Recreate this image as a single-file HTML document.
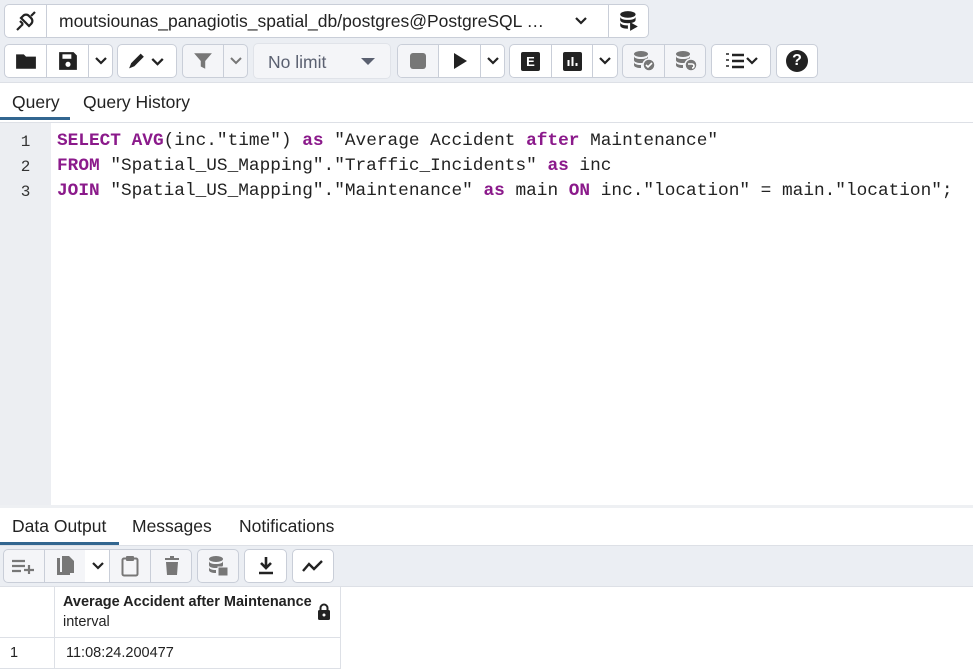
<!DOCTYPE html>
<html><head><meta charset="utf-8"><style>
*{box-sizing:border-box;margin:0;padding:0}
body{width:973px;height:669px;overflow:hidden;background:#fff;font-family:"Liberation Sans",sans-serif;color:#222;position:relative}
.abs{position:absolute}
.tb{position:absolute;left:0;top:0;width:973px;height:83px;background:#ebeef3;border-bottom:1px solid #dde0e6}
.grp{position:absolute;border:1px solid #c9ced8;border-radius:5px;background:#fff;overflow:hidden}
.sep{position:absolute;top:0;bottom:0;width:1px;background:#c9ced8}
.ic{position:absolute;display:flex;align-items:center;justify-content:center}
.tab{position:absolute;font-size:17.5px;color:#222}
.code{position:absolute;left:57px;font-family:"Liberation Mono",monospace;font-size:17.78px;color:#222;white-space:pre;line-height:25px}
.k{color:#8b1a8b;font-weight:bold}
.ln{position:absolute;width:51px;text-align:center;font-family:"Liberation Mono",monospace;font-size:16px;color:#333}
</style></head><body>
<div class="tb"></div>
<div class="grp" style="left:4px;top:4px;width:645px;height:34px">
 <div class="sep" style="left:41px"></div><div class="sep" style="left:603px"></div>
 <div class="ic" style="left:0;top:0;width:41px;height:32px"><svg width="24" height="24" viewBox="0 0 24 24" fill="none" stroke="#222" stroke-width="2.2"><path d="M3 21l4-4M17 7l4-4"/><path d="M7 9l8 8 2-2a4 4 0 0 0 0-6l-2-2a4 4 0 0 0-6 0z"/><path d="M9 15l-2 2M6 12l3 3"/></svg></div>
 <div class="abs" style="left:54px;top:6px;font-size:17.5px;color:#222">moutsiounas_panagiotis_spatial_db/postgres@PostgreSQL …</div>
 <div class="ic" style="left:564px;top:0;width:24px;height:32px"><svg width="14" height="10" viewBox="0 0 14 10"><path d="M2 2l5 5 5-5" stroke="#222" stroke-width="2.2" fill="none"/></svg></div>
 <div class="ic" style="left:604px;top:0;width:40px;height:32px"><svg width="22" height="22" viewBox="0 0 20 20" fill="#222"><ellipse cx="9" cy="4" rx="7" ry="3"/><path d="M2 6c0 2 3 3 7 3s7-1 7-3v3c0 2-3 3-7 3s-7-1-7-3z M2 11c0 2 3 3 7 3v3c-4 0-7-1-7-3z"/><path d="M11 11l7 4-7 4z"/></svg></div>
</div>
<div class="grp" style="left:4px;top:44px;width:109px;height:34px"><div class="sep" style="left:41px"></div><div class="sep" style="left:83px"></div>
 <div class="ic" style="left:0;top:0;width:41px;height:32px"><svg width="22" height="18" viewBox="0 0 20 16"><path d="M1 2h7l2 2h9v11H1z" fill="#222"/></svg></div>
 <div class="ic" style="left:42px;top:0;width:41px;height:32px"><svg width="20" height="20" viewBox="0 0 18 18"><path d="M1 1h13l3 3v13H1z" fill="#222"/><rect x="4" y="3" width="8" height="4" fill="#fff"/><circle cx="9" cy="12" r="2.3" fill="#fff"/></svg></div>
 <div class="ic" style="left:84px;top:0;width:24px;height:32px"><svg width="14" height="10"><path d="M2 2l5 5 5-5" stroke="#222" stroke-width="2.2" fill="none"/></svg></div>
</div>
<div class="grp" style="left:117px;top:44px;width:60px;height:34px"><div class="ic" style="left:0;top:0;width:58px;height:32px"><svg width="40" height="20" viewBox="0 0 38 18"><path d="M2 16l2-5 9-9 3 3-9 9z" fill="#222"/><path d="M24 7l5 5 5-5" stroke="#222" stroke-width="2.2" fill="none"/></svg></div></div>
<div class="grp" style="left:182px;top:44px;width:66px;height:34px;background:#f4f5f8"><div class="sep" style="left:40px"></div>
 <div class="ic" style="left:0;top:0;width:40px;height:32px"><svg width="20" height="20" viewBox="0 0 18 18"><path d="M1 2h16l-6 7v7l-4-2V9z" fill="#777"/></svg></div>
 <div class="ic" style="left:41px;top:0;width:24px;height:32px"><svg width="14" height="10"><path d="M2 2l5 5 5-5" stroke="#777" stroke-width="2" fill="none"/></svg></div></div>
<div class="grp" style="left:253px;top:43px;width:138px;height:36px;background:#f4f5f8;border-color:#e0e3e9"><div class="abs" style="left:14px;top:8px;font-size:17.5px;color:#5a6070">No limit</div><svg class="abs" style="left:107px;top:14px" width="14" height="8"><path d="M0 0h14l-7 7z" fill="#5a6070"/></svg></div>
<div class="grp" style="left:397px;top:44px;width:108px;height:34px"><div class="sep" style="left:40px"></div><div class="sep" style="left:82px"></div>
 <div class="abs" style="left:0;top:0;width:40px;height:32px;background:#f4f5f8"></div>
 <div class="ic" style="left:0;top:0;width:40px;height:32px"><div style="width:16px;height:16px;background:#777;border-radius:3px"></div></div>
 <div class="ic" style="left:41px;top:0;width:41px;height:32px"><svg width="16" height="18"><path d="M2 1l13 8-13 8z" fill="#222"/></svg></div>
 <div class="ic" style="left:83px;top:0;width:24px;height:32px"><svg width="14" height="10"><path d="M2 2l5 5 5-5" stroke="#222" stroke-width="2.2" fill="none"/></svg></div></div>
<div class="grp" style="left:509px;top:44px;width:109px;height:34px"><div class="sep" style="left:41px"></div><div class="sep" style="left:82px"></div>
 <div class="ic" style="left:0;top:0;width:41px;height:32px"><div style="width:19px;height:19px;background:#222;border-radius:2px;color:#fff;font-size:13px;font-weight:bold;text-align:center;line-height:19px">E</div></div>
 <div class="ic" style="left:42px;top:0;width:40px;height:32px"><svg width="19" height="19"><rect width="19" height="19" rx="2" fill="#222"/><path d="M5.5 8v6M9.5 5v9M13.5 11v3" stroke="#fff" stroke-width="2"/></svg></div>
 <div class="ic" style="left:83px;top:0;width:24px;height:32px"><svg width="14" height="10"><path d="M2 2l5 5 5-5" stroke="#222" stroke-width="2.2" fill="none"/></svg></div></div>
<div class="grp" style="left:622px;top:44px;width:84px;height:34px;background:#f4f5f8"><div class="sep" style="left:41px"></div>
 <div class="ic" style="left:0;top:0;width:41px;height:32px"><svg width="24" height="22"><ellipse cx="9" cy="4" rx="7" ry="3" fill="#777"/><path d="M2 6c0 2 3 3 7 3s7-1 7-3v4c0 2-3 3-7 3s-7-1-7-3zM2 12c0 2 3 3 7 3v3c-4 0-7-1-7-3z" fill="#777"/><circle cx="17" cy="15" r="6" fill="#777" stroke="#f4f5f8" stroke-width="1.5"/><path d="M14 15l2 2 4-4" stroke="#fff" stroke-width="1.6" fill="none"/></svg></div>
 <div class="ic" style="left:42px;top:0;width:41px;height:32px"><svg width="24" height="22"><ellipse cx="9" cy="4" rx="7" ry="3" fill="#777"/><path d="M2 6c0 2 3 3 7 3s7-1 7-3v4c0 2-3 3-7 3s-7-1-7-3zM2 12c0 2 3 3 7 3v3c-4 0-7-1-7-3z" fill="#777"/><circle cx="17" cy="15" r="6" fill="#777" stroke="#f4f5f8" stroke-width="1.5"/><path d="M14 14h4a2 2 0 0 1 0 4" stroke="#fff" stroke-width="1.6" fill="none"/></svg></div></div>
<div class="grp" style="left:711px;top:44px;width:60px;height:34px"><div class="ic" style="left:0;top:0;width:58px;height:32px"><svg width="36" height="20"><path d="M3 3h3M3 9h3M3 15h3" stroke="#222" stroke-width="1.4"/><path d="M9 4h12M9 10h12M9 16h12" stroke="#222" stroke-width="2.4"/><path d="M24 7l5 5 5-5" stroke="#222" stroke-width="2.2" fill="none"/></svg></div></div>
<div class="grp" style="left:776px;top:44px;width:42px;height:34px"><div class="ic" style="left:0;top:0;width:40px;height:32px"><div style="width:22px;height:22px;border-radius:50%;background:#222;color:#fff;font-weight:bold;font-size:16px;text-align:center;line-height:22px">?</div></div></div>
<div class="tab" style="left:12px;top:92px">Query</div>
<div class="tab" style="left:83px;top:92px">Query History</div>
<div class="abs" style="left:0;top:117px;width:70px;height:3px;background:#326690"></div>
<div class="abs" style="left:0;top:122px;width:973px;height:1px;background:#dde0e6"></div>
<div class="abs" style="left:0;top:123px;width:51px;height:382px;background:#eceef2"></div>
<div class="ln" style="top:130px;line-height:25px">1<br>2<br>3</div>
<div class="code" style="top:129px"><span class="k">SELECT</span> <span class="k">AVG</span>(inc."time") <span class="k">as</span> "Average Accident <span class="k">after</span> Maintenance"
<span class="k">FROM</span> "Spatial_US_Mapping"."Traffic_Incidents" <span class="k">as</span> inc
<span class="k">JOIN</span> "Spatial_US_Mapping"."Maintenance" <span class="k">as</span> main <span class="k">ON</span> inc."location" = main."location";</div>
<div class="abs" style="left:0;top:505px;width:973px;height:3px;background:#eef0f3"></div>
<div class="tab" style="left:12px;top:516px">Data Output</div>
<div class="tab" style="left:132px;top:516px">Messages</div>
<div class="tab" style="left:239px;top:516px">Notifications</div>
<div class="abs" style="left:0;top:542px;width:119px;height:3px;background:#326690"></div>
<div class="abs" style="left:0;top:545px;width:973px;height:42px;background:#ebeef3;border-top:1px solid #dde0e6;border-bottom:1px solid #dde0e6"></div>
<div class="grp" style="left:3px;top:549px;width:189px;height:34px;background:#f4f5f8"><div class="sep" style="left:40px"></div><div class="sep" style="left:81px"></div><div class="sep" style="left:105px"></div><div class="sep" style="left:146px"></div>
 <div class="abs" style="left:81px;top:0;width:24px;height:32px;background:#fff"></div>
 <div class="ic" style="left:0;top:0;width:40px;height:32px"><svg width="26" height="16"><path d="M1 3h13M1 8h13M1 13h9M13 12h10M18 7v10" stroke="#777" stroke-width="2.2"/></svg></div>
 <div class="ic" style="left:41px;top:0;width:40px;height:32px"><svg width="20" height="22"><path d="M2 3h3v14h10v3H2z" fill="#777"/><path d="M7 1h7l5 5v12H7z" fill="#777"/></svg></div>
 <div class="ic" style="left:82px;top:0;width:23px;height:32px"><svg width="14" height="10"><path d="M2 2l5 5 5-5" stroke="#222" stroke-width="2.2" fill="none"/></svg></div>
 <div class="ic" style="left:106px;top:0;width:40px;height:32px"><svg width="18" height="22"><rect x="1.5" y="3.5" width="15" height="17" rx="1.5" fill="none" stroke="#777" stroke-width="2"/><rect x="5" y="1" width="8" height="5" rx="1" fill="#777"/></svg></div>
 <div class="ic" style="left:147px;top:0;width:41px;height:32px"><svg width="16" height="20"><path d="M1 3h14M6 1h4" stroke="#777" stroke-width="2"/><path d="M2 6h12l-1 13H3z" fill="#777"/></svg></div>
</div>
<div class="grp" style="left:197px;top:549px;width:42px;height:34px;background:#f4f5f8"><div class="ic" style="left:0;top:0;width:40px;height:32px"><svg width="22" height="22"><ellipse cx="9" cy="4" rx="7" ry="3" fill="#777"/><path d="M2 6c0 2 3 3 7 3s7-1 7-3v4c0 2-3 3-7 3s-7-1-7-3zM2 12c0 2 3 3 7 3v3c-4 0-7-1-7-3z" fill="#777"/><rect x="11" y="12" width="10" height="9" fill="#777" stroke="#f4f5f8"/></svg></div></div>
<div class="grp" style="left:244px;top:549px;width:43px;height:34px"><div class="ic" style="left:0;top:0;width:41px;height:32px"><svg width="18" height="20"><path d="M9 1v10M4 7l5 5 5-5" stroke="#222" stroke-width="2.6" fill="none"/><path d="M2 17h14" stroke="#222" stroke-width="2.6"/></svg></div></div>
<div class="grp" style="left:292px;top:549px;width:42px;height:34px"><div class="ic" style="left:0;top:0;width:40px;height:32px"><svg width="22" height="14"><path d="M1 12l6-7 5 5 8-8" stroke="#222" stroke-width="2.4" fill="none"/></svg></div></div>
<div class="abs" style="left:0;top:587px;width:341px;height:82px;border-right:1px solid #dde0e6"></div>
<div class="abs" style="left:54px;top:587px;width:1px;height:82px;background:#dde0e6"></div>
<div class="abs" style="left:0;top:637px;width:341px;height:1px;background:#dde0e6"></div>
<div class="abs" style="left:0;top:668px;width:341px;height:1px;background:#dde0e6"></div>
<div class="abs" style="left:63px;top:594px;font-size:14.5px;font-weight:bold;color:#222">Average Accident after Maintenance</div>
<div class="abs" style="left:63px;top:614px;font-size:14.5px;color:#222">interval</div>
<svg class="abs" style="left:317px;top:603px" width="14" height="17"><path d="M3.5 8V5a3.5 3.5 0 0 1 7 0v3" stroke="#222" stroke-width="2" fill="none"/><rect x="1" y="7" width="12" height="10" rx="1.5" fill="#222"/><circle cx="7" cy="12" r="1.5" fill="#fff"/></svg>
<div class="abs" style="left:10px;top:645px;font-size:14.5px;color:#222">1</div>
<div class="abs" style="left:66px;top:645px;font-size:14.5px;color:#222">11:08:24.200477</div>
</body></html>
